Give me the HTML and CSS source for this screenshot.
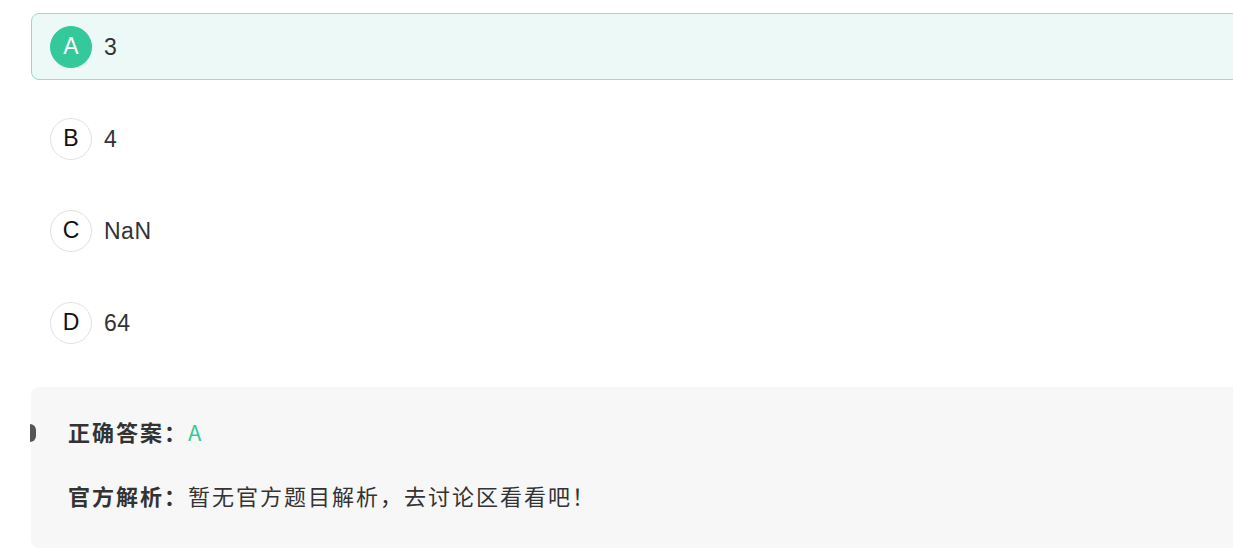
FILE: index.html
```html
<!DOCTYPE html>
<html lang="zh-CN">

<head>
    <meta charset="UTF-8">
    <meta name="viewport" content="width=device-width, initial-scale=1.0">
    <title>题目详情</title>
    <link rel="stylesheet" href="styles.css">
</head>

<body>
    <div class="question">
        <ul class="options">
            <li class="option selected">
                <span class="option-key">A</span>
                <span class="option-text">3</span>
            </li>
            <li class="option">
                <span class="option-key">B</span>
                <span class="option-text">4</span>
            </li>
            <li class="option">
                <span class="option-key">C</span>
                <span class="option-text">NaN</span>
            </li>
            <li class="option">
                <span class="option-key">D</span>
                <span class="option-text">64</span>
            </li>
        </ul>

        <div class="analysis">
            <span class="marker"></span>
            <p class="answer">正确答案：<span class="answer-key">A</span></p>
            <p class="official"><b>官方解析：</b>暂无官方题目解析，去讨论区看看吧！</p>
        </div>
    </div>
</body>

</html>
```

FILE: styles.css
```css
html,
body {
    margin: 0;
    padding: 0;
    overflow: hidden;
}

body {
    font-family: "Liberation Sans", "Noto Sans CJK SC", Arial, sans-serif;
    background: #fff;
    color: #333;
}

.question {
    width: 1300px;
    padding: 13px 0 0 31px;
}

.options {
    list-style: none;
    margin: 0;
    padding: 0;
}

.option {
    display: flex;
    align-items: center;
    height: 67px;
    margin-bottom: 25px;
    padding-left: 18px;
    box-sizing: border-box;
    border: 1px solid transparent;
    border-radius: 8px;
}

.option.selected {
    background: #edf9f6;
    border-color: #8ee2c4;
}

.option-key {
    display: flex;
    align-items: center;
    justify-content: center;
    width: 42px;
    height: 42px;
    box-sizing: border-box;
    border: 1px solid #e1e1e1;
    border-radius: 50%;
    background: #fff;
    color: #111;
    font-size: 23px;
}

.selected .option-key {
    background: #34c99a;
    border-color: #34c99a;
    color: #fff;
}

.option-text {
    margin-left: 12px;
    padding-top: 1px;
    font-size: 23px;
    letter-spacing: 0.5px;
    color: #333;
}

.analysis {
    position: relative;
    margin-top: 31px;
    height: 161px;
    padding: 28px 0 0 37px;
    box-sizing: border-box;
    background: #f7f7f7;
    border-radius: 8px;
}

.marker {
    position: absolute;
    left: -1px;
    top: 37px;
    width: 6px;
    height: 18px;
    background: #555;
    border-radius: 0 6px 6px 0;
}

.analysis p {
    margin: 0;
    font-family: "Noto Sans CJK SC", "Liberation Sans", sans-serif;
    font-size: 22px;
    letter-spacing: 2px;
    line-height: 32px;
    color: #333;
}

.answer {
    font-weight: bold;
}

.answer-key {
    font-weight: normal;
    color: #34c99a;
}

.analysis .official {
    margin-top: 32px;
}

.official b {
    font-weight: bold;
}
```
